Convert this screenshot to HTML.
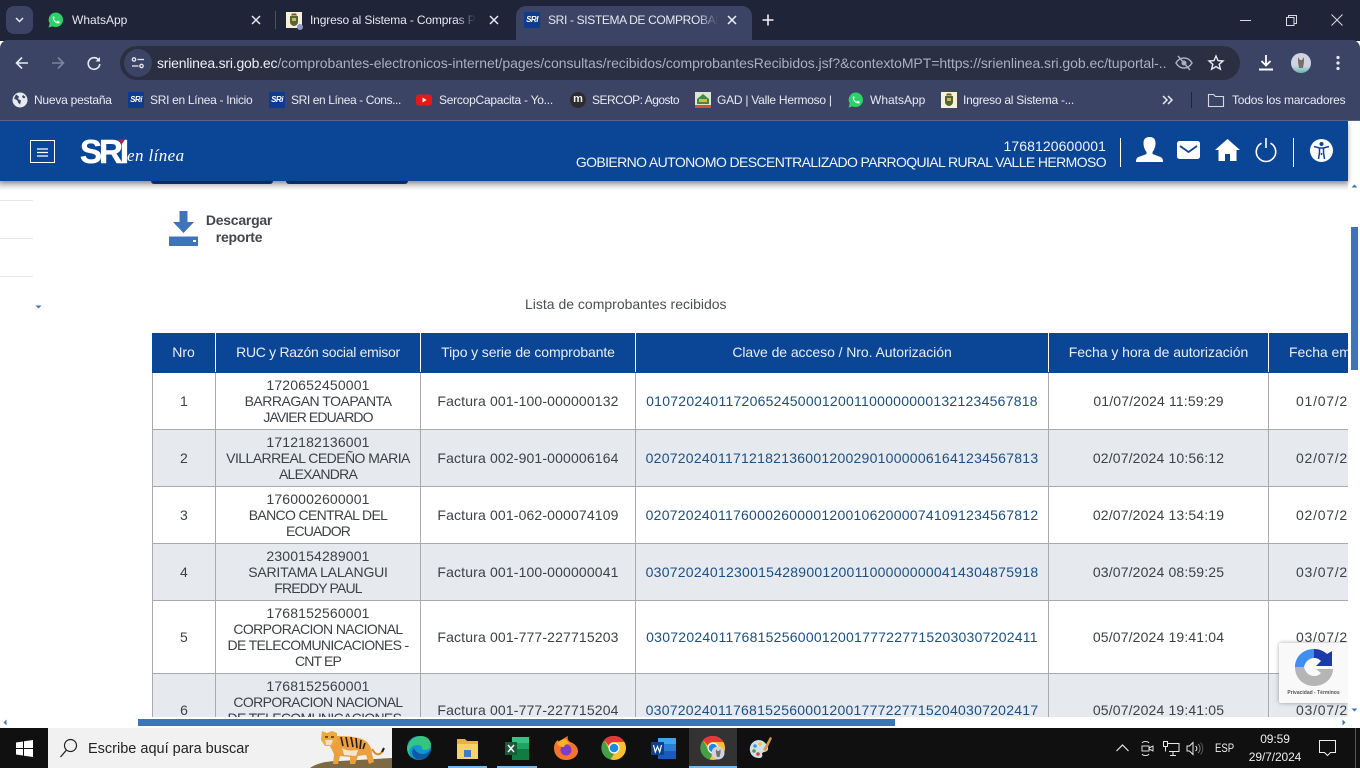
<!DOCTYPE html>
<html lang="es"><head><meta charset="utf-8"><title>SRI</title>
<style>
html,body{margin:0;padding:0}
body{width:1360px;height:768px;position:relative;overflow:hidden;background:#fff;font-family:"Liberation Sans",sans-serif;color:#3c4146}
.a,.a *{box-sizing:border-box}
.a{position:absolute;white-space:nowrap}
svg{position:absolute;overflow:visible}
.t{font-size:12px;color:#e6e8ef;line-height:16px}
.bm{font-size:12px;color:#e8eaf2;line-height:16px;top:92px}
.ic{width:16px;height:16px;top:92px}
.sri{background:#0d3c8f;color:#fff;font:italic bold 8px/16px "Liberation Sans",sans-serif;text-align:center;letter-spacing:-.5px}
.th{background:#0b4596;color:#e9eef6;font-size:14px;line-height:39px;text-align:center;top:333px;height:39px}
.c{font-size:14px;line-height:16px;text-align:center;color:#3c4146;letter-spacing:.15px;display:flex;align-items:center;justify-content:center;flex-direction:column;overflow:hidden}
.c span,.r span{display:block}
.k{color:#1a4f85;letter-spacing:.25px}
.d{letter-spacing:.75px}
.ln{background:#a9aaad}
</style></head><body>

<!-- page content -->
<div class="a" style="left:0;top:181px;width:1348px;height:10px;background:linear-gradient(#cfcfcf,#fff)"></div>
<div class="a" style="left:151px;top:181px;width:122px;height:3px;background:#0b3a80;border-radius:0 0 3px 3px"></div>
<div class="a" style="left:286px;top:181px;width:122px;height:3px;background:#0b3a80;border-radius:0 0 3px 3px"></div>
<div class="a" style="left:0;top:200px;width:33px;height:1px;background:#e8e8e8"></div>
<div class="a" style="left:0;top:238px;width:33px;height:1px;background:#e8e8e8"></div>
<div class="a" style="left:0;top:276px;width:33px;height:1px;background:#e8e8e8"></div>
<svg style="left:35px;top:305px" width="7" height="4"><path d="M0.5 0.5h6L3.5 3.5z" fill="#3f74ba"/></svg>
<svg style="left:169px;top:211px" width="29" height="36"><path d="M10.5 0h8v11h6.5L14.500 22 4 11h6.500z" fill="#3f74ba"/><path d="M0 25.500h29V35H0z" fill="#3f74ba"/><path d="M24 29h3v2h-3z" fill="#fff"/></svg>
<div class="a" style="left:199px;top:212px;width:80px;text-align:center;font-size:14px;line-height:17px;font-weight:bold;color:#42464c;letter-spacing:-.25px">Descargar<br>reporte</div>
<div class="a" style="left:525px;top:296px;font-size:14px;line-height:16px;color:#4b4f54">Lista de comprobantes recibidos</div>

<!-- table backgrounds -->
<div class="a" style="left:152px;top:430px;width:1196px;height:56px;background:#e6e9ee"></div>
<div class="a" style="left:152px;top:544px;width:1196px;height:56px;background:#e6e9ee"></div>
<div class="a" style="left:152px;top:674px;width:1196px;height:43px;background:#e6e9ee"></div>
<!-- header -->
<div class="a th" style="left:152px;width:63px">Nro</div>
<div class="a th" style="left:216px;width:204px;letter-spacing:-.3px">RUC y Razón social emisor</div>
<div class="a th" style="left:421px;width:214px;letter-spacing:-.12px">Tipo y serie de comprobante</div>
<div class="a th" style="left:636px;width:412px;letter-spacing:-.07px">Clave de acceso / Nro. Autorización</div>
<div class="a th" style="left:1049px;width:219px;letter-spacing:-.04px">Fecha y hora de autorización</div>
<div class="a th" style="left:1269px;width:79px;overflow:hidden;text-align:left;padding-left:20px;letter-spacing:-.05px">Fecha emisión</div>
<div class="a" style="left:152px;top:372px;width:1196px;height:1px;background:#0b4596"></div>
<!-- grid lines -->
<div class="a ln" style="left:152px;top:429px;width:1196px;height:1px"></div>
<div class="a ln" style="left:152px;top:486px;width:1196px;height:1px"></div>
<div class="a ln" style="left:152px;top:543px;width:1196px;height:1px"></div>
<div class="a ln" style="left:152px;top:600px;width:1196px;height:1px"></div>
<div class="a ln" style="left:152px;top:673px;width:1196px;height:1px"></div>
<div class="a ln" style="left:152px;top:373px;width:1px;height:344px"></div>
<div class="a ln" style="left:215px;top:373px;width:1px;height:344px"></div>
<div class="a ln" style="left:420px;top:373px;width:1px;height:344px"></div>
<div class="a ln" style="left:635px;top:373px;width:1px;height:344px"></div>
<div class="a ln" style="left:1048px;top:373px;width:1px;height:344px"></div>
<div class="a ln" style="left:1268px;top:373px;width:1px;height:344px"></div>

<!-- row 1 -->
<div class="a c" style="left:153px;top:373px;width:62px;height:56px">1</div>
<div class="a c" style="left:216px;top:373px;width:204px;height:56px"><span>1720652450001</span><span style="letter-spacing:-.5px">BARRAGAN TOAPANTA</span><span style="letter-spacing:-.9px">JAVIER EDUARDO</span></div>
<div class="a c" style="left:421px;top:373px;width:214px;height:56px">Factura 001-100-000000132</div>
<div class="a c k" style="left:636px;top:373px;width:412px;height:56px">0107202401172065245000120011000000001321234567818</div>
<div class="a c" style="left:1049px;top:373px;width:219px;height:56px">01/07/2024 11:59:29</div>
<div class="a c d" style="left:1296px;top:373px;width:52px;height:56px;align-items:flex-start">01/07/2</div>
<!-- row 2 -->
<div class="a c" style="left:153px;top:430px;width:62px;height:56px">2</div>
<div class="a c" style="left:216px;top:430px;width:204px;height:56px"><span>1712182136001</span><span style="letter-spacing:-.55px">VILLARREAL CEDEÑO MARIA</span><span style="letter-spacing:-.75px">ALEXANDRA</span></div>
<div class="a c" style="left:421px;top:430px;width:214px;height:56px">Factura 002-901-000006164</div>
<div class="a c k" style="left:636px;top:430px;width:412px;height:56px">0207202401171218213600120029010000061641234567813</div>
<div class="a c" style="left:1049px;top:430px;width:219px;height:56px">02/07/2024 10:56:12</div>
<div class="a c d" style="left:1296px;top:430px;width:52px;height:56px;align-items:flex-start">02/07/2</div>
<!-- row 3 -->
<div class="a c" style="left:153px;top:487px;width:62px;height:56px">3</div>
<div class="a c" style="left:216px;top:487px;width:204px;height:56px"><span>1760002600001</span><span style="letter-spacing:-.65px">BANCO CENTRAL DEL</span><span style="letter-spacing:-.85px">ECUADOR</span></div>
<div class="a c" style="left:421px;top:487px;width:214px;height:56px">Factura 001-062-000074109</div>
<div class="a c k" style="left:636px;top:487px;width:412px;height:56px">0207202401176000260000120010620000741091234567812</div>
<div class="a c" style="left:1049px;top:487px;width:219px;height:56px">02/07/2024 13:54:19</div>
<div class="a c d" style="left:1296px;top:487px;width:52px;height:56px;align-items:flex-start">02/07/2</div>
<!-- row 4 -->
<div class="a c" style="left:153px;top:544px;width:62px;height:56px">4</div>
<div class="a c" style="left:216px;top:544px;width:204px;height:56px"><span>2300154289001</span><span style="letter-spacing:-.2px">SARITAMA LALANGUI</span><span style="letter-spacing:-.85px">FREDDY PAUL</span></div>
<div class="a c" style="left:421px;top:544px;width:214px;height:56px">Factura 001-100-000000041</div>
<div class="a c k" style="left:636px;top:544px;width:412px;height:56px">0307202401230015428900120011000000000414304875918</div>
<div class="a c" style="left:1049px;top:544px;width:219px;height:56px">03/07/2024 08:59:25</div>
<div class="a c d" style="left:1296px;top:544px;width:52px;height:56px;align-items:flex-start">03/07/2</div>
<!-- row 5 -->
<div class="a c" style="left:153px;top:601px;width:62px;height:72px">5</div>
<div class="a c" style="left:216px;top:601px;width:204px;height:72px"><span>1768152560001</span><span style="letter-spacing:-.6px">CORPORACION NACIONAL</span><span style="letter-spacing:-.68px">DE TELECOMUNICACIONES -</span><span style="letter-spacing:-.85px">CNT EP</span></div>
<div class="a c" style="left:421px;top:601px;width:214px;height:72px">Factura 001-777-227715203</div>
<div class="a c k" style="left:636px;top:601px;width:412px;height:72px">0307202401176815256000120017772277152030307202411</div>
<div class="a c" style="left:1049px;top:601px;width:219px;height:72px">05/07/2024 19:41:04</div>
<div class="a c d" style="left:1296px;top:601px;width:52px;height:72px;align-items:flex-start">03/07/2</div>
<!-- row 6 -->
<div class="a" style="left:153px;top:702px;width:62px;height:15px;overflow:hidden;font-size:14px;line-height:16px;text-align:center">6</div>
<div class="a r" style="left:216px;top:678px;width:204px;height:39px;overflow:hidden;font-size:14px;line-height:16px;text-align:center;letter-spacing:.15px"><span>1768152560001</span><span style="letter-spacing:-.6px">CORPORACION NACIONAL</span><span style="letter-spacing:-.68px">DE TELECOMUNICACIONES -</span></div>
<div class="a" style="left:421px;top:702px;width:214px;height:15px;overflow:hidden;font-size:14px;line-height:16px;text-align:center;letter-spacing:.15px">Factura 001-777-227715204</div>
<div class="a" style="left:636px;top:702px;width:412px;height:15px;overflow:hidden;font-size:14px;line-height:16px;text-align:center;letter-spacing:.25px;color:#1a4f85">0307202401176815256000120017772277152040307202417</div>
<div class="a" style="left:1049px;top:702px;width:219px;height:15px;overflow:hidden;font-size:14px;line-height:16px;text-align:center;letter-spacing:.15px">05/07/2024 19:41:05</div>
<div class="a" style="left:1296px;top:702px;width:52px;height:15px;overflow:hidden;font-size:14px;line-height:16px;letter-spacing:.75px">03/07/2</div>

<!-- recaptcha -->
<div class="a" style="left:1279px;top:643px;width:69px;height:60px;background:#f9f9f9;box-shadow:0 0 4px rgba(0,0,0,.35);border-radius:2px 0 0 2px"></div>
<svg style="left:1295px;top:649px" width="38" height="37" viewBox="0 0 38 37">
<path d="M0 18C0 8 8 0 19 0v9c-5 0-9 4-10 9z" fill="#3f8ef2"/>
<path d="M19 0c5 0 10 2 13 5l5-3v15H21l5-5c-2-2-4-3-7-3z" fill="#1c3aa9"/>
<path d="M0 18h9c1 5 5 9 10 9 3 0 5-1 7-3l-5-4h17c0 9-8 17-19 17C8 37 0 29 0 18z" fill="#b5b5b5"/>
</svg>
<div class="a" style="left:1279px;top:689px;width:69px;text-align:center;font-size:5px;line-height:8px;font-weight:bold;color:#555">Privacidad - Términos</div>

<!-- scrollbars -->
<div class="a" style="left:1348px;top:181px;width:12px;height:536px;background:#fff"></div>
<svg style="left:1351px;top:184px" width="7" height="4"><path d="M0.500 3.500h6L3.500 0.500z" fill="#3f74ba"/></svg>
<div class="a" style="left:1351px;top:227px;width:7px;height:143px;background:#3f74ba"></div>
<svg style="left:1351px;top:708px" width="7" height="4"><path d="M0.500 0.500h6L3.500 3.500z" fill="#3f74ba"/></svg>
<div class="a" style="left:0;top:717px;width:1360px;height:11px;background:#fff"></div>
<svg style="left:3px;top:719px" width="4" height="7"><path d="M3.500 0.500v6L0.500 3.500z" fill="#3f74ba"/></svg>
<div class="a" style="left:138px;top:719px;width:757px;height:7px;background:#3f74ba"></div>
<svg style="left:1342px;top:719px" width="4" height="7"><path d="M0.500 0.500v6L3.500 3.500z" fill="#3f74ba"/></svg>

<!-- SRI header -->
<div class="a" style="left:0;top:121px;width:1348px;height:60px;background:#0b4596;box-shadow:0 2px 5px rgba(0,0,0,.35)"></div>
<div class="a" style="left:30px;top:140px;width:25px;height:23px;border:1px solid #fff"></div>
<svg style="left:37px;top:148px" width="11" height="9"><path d="M0 1h11M0 4.500h11M0 8h11" stroke="#fff" stroke-width="1.200"/></svg>
<div class="a" style="left:80px;top:134px;font:bold 33px/36px 'Liberation Sans',sans-serif;color:#fff;letter-spacing:-3px;-webkit-text-stroke:.5px #fff">SRI</div>
<svg style="left:117px;top:139px" width="8" height="6"><path d="M1 0.500h7L5 5z" fill="#c8203c"/></svg>
<div class="a" style="left:127px;top:146px;font:italic 17px/20px 'Liberation Serif',serif;color:#fff;letter-spacing:.4px">en línea</div>
<div class="a" style="right:254px;top:138px;text-align:right;font-size:14px;line-height:16px;color:#f2f5fa"><span style="letter-spacing:.1px">1768120600001</span><br><span style="letter-spacing:-.61px">GOBIERNO AUTONOMO DESCENTRALIZADO PARROQUIAL RURAL VALLE HERMOSO</span></div>
<div class="a" style="left:1120px;top:138px;width:1px;height:29px;background:#fff"></div>
<div class="a" style="left:1293px;top:138px;width:1px;height:29px;background:#fff"></div>
<svg style="left:1136px;top:137px" width="27" height="25" viewBox="0 0 27 25"><path d="M13.500 0c4 0 6 2 6 6 0 4-1.500 7-3 9v2l8 3c1.500.6 2.500 2 2.500 5H0c0-3 1-4.400 2.500-5l8-3v-2c-1.500-2-3-5-3-9 0-4 2-6 6-6z" fill="#fff"/></svg>
<svg style="left:1177px;top:141px" width="23" height="18" viewBox="0 0 23 18"><rect width="23" height="18" rx="2.500" fill="#fff"/><path d="M3 5l8.500 6L20 5" fill="none" stroke="#0b4596" stroke-width="1.800"/></svg>
<svg style="left:1215px;top:139px" width="25" height="22" viewBox="0 0 25 22"><path d="M12.500 0L25 11h-3.500v11H15v-7h-5v7H3.500V11H0z" fill="#fff"/></svg>
<svg style="left:1255px;top:138px" width="22" height="23" viewBox="0 0 22 23"><path d="M6.500 5.200a9.700 9.700 0 1 0 9 0" fill="none" stroke="#fff" stroke-width="1.600"/><path d="M11 0v10" stroke="#fff" stroke-width="1.600"/></svg>
<svg style="left:1310px;top:139px" width="23" height="23" viewBox="0 0 23 23"><circle cx="11.500" cy="11.500" r="11.500" fill="#fff"/><circle cx="11.500" cy="5" r="2" fill="#0b4596"/><path d="M4 7.500l5.500 1.500h4L19 7.500M9.500 9v4.500l-1 6.500M13.500 9v4.500l1 6.500M11.500 14v2" fill="none" stroke="#0b4596" stroke-width="1.500"/></svg>

<!-- Chrome frame -->
<div class="a" style="left:0;top:0;width:1360px;height:41px;background:#1f2438"></div>
<div class="a" style="left:0;top:40px;width:1360px;height:81px;background:#3c4466;border-radius:8px 8px 0 0"></div>
<div class="a" style="left:6px;top:6px;width:27px;height:28px;background:#3c4466;border-radius:8px"></div>
<svg style="left:15px;top:17px" width="9" height="6"><path d="M1 1l3.500 3.500L8 1" fill="none" stroke="#e8eaf2" stroke-width="1.500"/></svg>
<!-- whatsapp tab -->
<svg style="left:48px;top:12px" width="16" height="16" viewBox="0 0 16 16"><path d="M8 .500A7.300 7.300 0 0 0 1.700 11.500L.5 15.500l4.100-1.100A7.300 7.300 0 1 0 8 .500z" fill="#2bd366"/><path d="M5.500 4.200c-.5.300-1 1.200-.8 2.200.4 2 2.500 4.300 4.700 5 1 .3 2-.2 2.300-.9.200-.5.100-.8-.1-.9l-1.600-.8c-.3-.1-.5 0-.7.300l-.5.600c-1.100-.3-2.500-1.700-2.900-2.800l.5-.6c.2-.2.200-.4.100-.7l-.6-1.400c-.1-.3-.2-.3-.4-.2z" fill="#fff"/></svg>
<div class="a t" style="left:72px;top:12px">WhatsApp</div>
<svg style="left:251px;top:15px" width="10" height="10"><path d="M1 1l8 8M9 1l-8 8" stroke="#e8eaf2" stroke-width="1.500"/></svg>
<div class="a" style="left:275px;top:11px;width:1px;height:18px;background:#4a5068"></div>
<!-- compras tab -->
<div class="a" style="left:286px;top:12px;width:16px;height:16px;background:#f6f0d8"></div>
<svg style="left:288px;top:13px" width="12" height="14" viewBox="0 0 12 14"><path d="M2 3h8v6c0 2-2 4-4 4s-4-2-4-4z" fill="#56643a"/><path d="M4 5h4v3H4z" fill="#d4b44a"/><path d="M4 0.500h4l1 2H3z" fill="#6b5a2c"/></svg>
<div class="a" style="left:297px;top:24px;width:6px;height:6px;background:#8f99c8;border-radius:50%"></div>
<div class="a t" style="left:310px;top:12px;width:166px;overflow:hidden;letter-spacing:-.15px;-webkit-mask-image:linear-gradient(90deg,#000 88%,transparent)">Ingreso al Sistema - Compras Públicas</div>
<svg style="left:489px;top:15px" width="10" height="10"><path d="M1 1l8 8M9 1l-8 8" stroke="#e8eaf2" stroke-width="1.500"/></svg>
<!-- active tab -->
<div class="a" style="left:516px;top:6px;width:236px;height:36px;background:#3c4466;border-radius:10px 10px 0 0"></div>
<div class="a sri" style="left:524px;top:12px;width:16px;height:16px">SRI</div>
<div class="a t" style="left:548px;top:12px;width:170px;overflow:hidden;letter-spacing:-.35px;-webkit-mask-image:linear-gradient(90deg,#000 88%,transparent)">SRI - SISTEMA DE COMPROBANTES</div>
<svg style="left:727px;top:15px" width="10" height="10"><path d="M1 1l8 8M9 1l-8 8" stroke="#f0f2f8" stroke-width="1.500"/></svg>
<svg style="left:762px;top:14px" width="12" height="12"><path d="M6 0.500v11M0.500 6h11" stroke="#f0f2f8" stroke-width="1.600"/></svg>
<!-- window controls -->
<svg style="left:1240px;top:20px" width="11" height="1"><path d="M0 .5h11" stroke="#d8dae2"/></svg>
<svg style="left:1286px;top:15px" width="11" height="11"><path d="M.5 2.500h7.500v8H.5zM2.500 2.500V.5h8v8H8" fill="none" stroke="#d8dae2"/></svg>
<svg style="left:1331px;top:14px" width="12" height="12"><path d="M.5.5l11 11M11.500.5l-11 11" stroke="#d8dae2"/></svg>

<!-- toolbar -->
<svg style="left:15px;top:56px" width="14" height="14"><path d="M13 7H2M7 1.500L1.500 7 7 12.500" fill="none" stroke="#e8eaf2" stroke-width="1.600"/></svg>
<svg style="left:51px;top:56px" width="14" height="14"><path d="M1 7h11M7 1.500L12.500 7 7 12.500" fill="none" stroke="#7d84a0" stroke-width="1.600"/></svg>
<svg style="left:87px;top:56px" width="14" height="14" viewBox="0 0 14 14"><path d="M12 4.500A5.800 5.800 0 1 0 12.800 8" fill="none" stroke="#e8eaf2" stroke-width="1.600"/><path d="M13 1v4.500H8.500z" fill="#e8eaf2"/></svg>
<div class="a" style="left:120px;top:46px;width:1120px;height:34px;background:#2a2f42;border-radius:17px"></div>
<div class="a" style="left:124px;top:49px;width:28px;height:28px;background:#3c4466;border-radius:50%"></div>
<svg style="left:131px;top:57px" width="14" height="12" viewBox="0 0 14 12"><circle cx="3" cy="2.500" r="1.700" fill="none" stroke="#e8eaf2" stroke-width="1.300"/><path d="M6.500 2.500H13M1 9h6.500" stroke="#e8eaf2" stroke-width="1.300"/><circle cx="10.500" cy="9" r="1.700" fill="none" stroke="#e8eaf2" stroke-width="1.300"/></svg>
<div class="a" style="left:157px;top:55px;font-size:14px;line-height:17px;color:#aab0c4;width:1010px;overflow:hidden;letter-spacing:-.06px"><span style="color:#eef0f6;letter-spacing:-.2px">srienlinea.sri.gob.ec</span>/comprobantes-electronicos-internet/pages/consultas/recibidos/comprobantesRecibidos.jsf?&amp;contextoMPT=https://srienlinea.sri.gob.ec/tuportal-...</div>
<svg style="left:1175px;top:54px" width="18" height="18" viewBox="0 0 18 18"><path d="M1 9c2-3.500 5-5 8-5s6 1.500 8 5c-2 3.500-5 5-8 5s-6-1.500-8-5z" fill="none" stroke="#aab0c4" stroke-width="1.400"/><circle cx="9" cy="9" r="2.500" fill="#aab0c4"/><path d="M3 2l12 14" stroke="#aab0c4" stroke-width="1.500"/></svg>
<svg style="left:1208px;top:55px" width="16" height="15" viewBox="0 0 16 15"><path d="M8 1l2 4.600 5 .4-3.800 3.300 1.200 4.900L8 11.600l-4.400 2.600 1.200-4.900L1 6l5-.4z" fill="none" stroke="#e8eaf2" stroke-width="1.400"/></svg>
<svg style="left:1258px;top:54px" width="16" height="17" viewBox="0 0 16 17"><path d="M8 1v10M3.500 7L8 11.500 12.500 7" fill="none" stroke="#fff" stroke-width="1.800"/><path d="M1 15.500h14" stroke="#fff" stroke-width="2"/></svg>
<div class="a" style="left:1291px;top:53px;width:20px;height:20px;border-radius:50%;background:linear-gradient(#cfd3e2 65%,#5fb8b0)"></div>
<svg style="left:1296px;top:56px" width="10" height="14"><path d="M2 1l2 3h2l2-3v5L7 12H3L2 6z" fill="#7a6f62"/></svg>
<svg style="left:1336px;top:55px" width="4" height="16"><circle cx="2" cy="2.500" r="1.600" fill="#e8eaf2"/><circle cx="2" cy="8" r="1.600" fill="#e8eaf2"/><circle cx="2" cy="13.500" r="1.600" fill="#e8eaf2"/></svg>

<!-- bookmarks -->
<svg class="ic" style="left:12px" viewBox="0 0 16 16"><circle cx="8" cy="8" r="7.500" fill="#e8eaf2"/><path d="M4 2.500l3 2-1 2.500 3 1.500-1 4-2-2-.5-2L2 6.500zM11 3l2.500 2-1.500 1.500L10 5z" fill="#3c4466"/></svg>
<div class="a bm" style="left:34px;letter-spacing:-.23px">Nueva pestaña</div>
<div class="a sri ic" style="left:128px">SRi</div>
<div class="a bm" style="left:150px;letter-spacing:-.3px">SRI en Línea - Inicio</div>
<div class="a sri ic" style="left:269px">SRi</div>
<div class="a bm" style="left:291px;letter-spacing:-.4px">SRI en Línea - Cons...</div>
<svg class="ic" style="left:416px" viewBox="0 0 16 16"><rect y="2.500" width="16" height="11" rx="3" fill="#e61919"/><path d="M6.500 5.500v5l4-2.500z" fill="#fff"/></svg>
<div class="a bm" style="left:439px;letter-spacing:-.25px">SercopCapacita - Yo...</div>
<div class="a" style="left:570px;top:92px;width:16px;height:16px;border-radius:50%;background:#2d2d2f;color:#f2f2f2;font:bold 11px/15px 'Liberation Sans',sans-serif;text-align:center">m</div>
<div class="a bm" style="left:592px;letter-spacing:-.5px">SERCOP: Agosto</div>
<svg class="ic" style="left:695px" viewBox="0 0 16 16"><rect width="16" height="16" fill="#dfe3d2"/><path d="M8 2l6 5v5H2V7z" fill="#3f8a4a"/><path d="M4 7h8v3H4z" fill="#d8b84a"/><path d="M0 13h16v3H0z" fill="#c8553a"/></svg>
<div class="a bm" style="left:717px;letter-spacing:-.25px">GAD | Valle Hermoso |</div>
<svg class="ic" style="left:848px" viewBox="0 0 16 16"><path d="M8 .500A7.300 7.300 0 0 0 1.700 11.500L.5 15.500l4.100-1.100A7.300 7.300 0 1 0 8 .500z" fill="#2bd366"/><path d="M5.500 4.200c-.5.300-1 1.200-.8 2.200.4 2 2.500 4.300 4.700 5 1 .3 2-.2 2.300-.9.200-.5.100-.8-.1-.9l-1.600-.8c-.3-.1-.5 0-.7.300l-.5.600c-1.100-.3-2.500-1.700-2.900-2.800l.5-.6c.2-.2.200-.4.100-.7l-.6-1.400c-.1-.3-.2-.3-.4-.2z" fill="#fff"/></svg>
<div class="a bm" style="left:870px">WhatsApp</div>
<div class="a ic" style="left:941px;background:#f6f0d8"></div>
<svg style="left:943px;top:93px" width="12" height="14" viewBox="0 0 12 14"><path d="M2 3h8v6c0 2-2 4-4 4s-4-2-4-4z" fill="#56643a"/><path d="M4 5h4v3H4z" fill="#d4b44a"/><path d="M4 0.500h4l1 2H3z" fill="#6b5a2c"/></svg>
<div class="a bm" style="left:963px;letter-spacing:-.25px">Ingreso al Sistema -...</div>
<svg style="left:1162px;top:95px" width="11" height="10"><path d="M1 1l4 4-4 4M6 1l4 4-4 4" fill="none" stroke="#e8eaf2" stroke-width="1.500"/></svg>
<div class="a" style="left:1191px;top:92px;width:1px;height:16px;background:#1f2438"></div>
<svg style="left:1208px;top:93px" width="16" height="14"><path d="M.5 1.500h5l2 2h8v10H.5z" fill="none" stroke="#d8dae2" stroke-width="1.100"/></svg>
<div class="a bm" style="left:1232px;letter-spacing:-.2px">Todos los marcadores</div>
<div class="a" style="left:0;top:120px;width:1360px;height:1px;background:#5a6384"></div>

<!-- taskbar -->
<div class="a" style="left:0;top:728px;width:1360px;height:40px;background:#101010"></div>
<svg style="left:16px;top:740px" width="17" height="17" viewBox="0 0 17 17"><path d="M0 2.500l7-1v6.500H0zM8 1.300L17 0v8H8zM0 9h7v6.500l-7-1zM8 9h9v8l-9-1.300z" fill="#fff"/></svg>
<div class="a" style="left:48px;top:728px;width:344px;height:40px;background:#f1f1f1"></div>
<svg style="left:59px;top:738px" width="20" height="20" viewBox="0 0 20 20"><circle cx="11.500" cy="7.500" r="6" fill="none" stroke="#222" stroke-width="1.200"/><path d="M7.500 12l-6 7" stroke="#222" stroke-width="1.300"/></svg>
<div class="a" style="left:88px;top:741px;font-size:14.500px;line-height:17px;color:#222">Escribe aquí para buscar</div>
<!-- tiger -->
<svg style="left:310px;top:728px" width="82" height="40" viewBox="0 0 82 40">
<path d="M0 40C6 36 14 33 30 33L82 30V40z" fill="#7c6a45"/>
<path d="M62 21C66 28 70 28 73 22" fill="none" stroke="#d8892e" stroke-width="2"/>
<path d="M72 24l2-4" stroke="#2a1c10" stroke-width="2"/>
<path d="M24 8C34 8 46 8 54 12C60 15 62 22 62 26L64 34L59 36L56 27L48 28L45 36L40 36L40 29L30 28L28 36L23 36L24 26L20 18z" fill="#eba040"/>
<path d="M32 20C38 24 44 22 48 22L46 28L34 27z" fill="#f2e6d0"/>
<path d="M31 9l2 9M36 9l2 10M41 9l2 10M46 10l1 10M51 12l-1 9M55 15l-2 6" stroke="#2a1c10" stroke-width="1.600" fill="none"/>
<path d="M12 3L17 5L22 3L27 5L27 14L22 18L15 18L11 12z" fill="#eda83f"/>
<path d="M15 12h8l-2 5h-5z" fill="#efe0c4"/>
<path d="M15 9h3M21 9h3" stroke="#2a1c10" stroke-width="1.200"/>
</svg>
<!-- edge -->
<svg style="left:407px;top:736px" width="24" height="24" viewBox="0 0 24 24"><circle cx="12" cy="12" r="12" fill="#1296cf"/><path d="M0 12C2 4 8 0 14 0c6 0 10 4 10 9 0 3-3 5-6 5-4 0-3-2-3-3-2-3-9-3-12 2-1 2-1 6 2 9-3-2-5-6-5-10z" fill="#37c481"/><path d="M24 13c0 4-3 8-7 10-4 1-8 1-10-2-2-2-3-6 0-9 1 3 4 6 9 6 3 0 6-2 8-5z" fill="#0c59a4"/></svg>
<!-- explorer -->
<svg style="left:456px;top:737px" width="23" height="23" viewBox="0 0 23 23"><path d="M1 2h8l2 2h11v5H1z" fill="#e8b33a"/><path d="M1 7h21v15H1z" fill="#f6d365"/><path d="M8 13h7v7H8z" fill="#3f7ec2"/></svg>
<div class="a" style="left:448px;top:766px;width:39px;height:2px;background:#76b9ed"></div>
<!-- excel -->
<svg style="left:505px;top:737px" width="24" height="23" viewBox="0 0 24 23"><path d="M7 0h17v23H7z" fill="#21a366"/><path d="M7 0h17v6H7z" fill="#33c481"/><path d="M7 12h17v11H7z" fill="#107c41"/><path d="M0 5h12v13H0z" fill="#185c37"/><path d="M3 8l6 7M9 8l-6 7" stroke="#fff" stroke-width="1.500"/></svg>
<div class="a" style="left:497px;top:766px;width:40px;height:2px;background:#76b9ed"></div>
<!-- firefox -->
<svg style="left:554px;top:736px" width="24" height="24" viewBox="0 0 24 24"><path d="M12 24C5 24 0 19 0 12 0 8 2 5 4 4l1 3c2-3 5-5 9-7-1 3 0 4 2 6 4 1 8 5 8 9 0 5-5 9-12 9z" fill="#f5742b"/><circle cx="12" cy="14" r="5.500" fill="#7c3ccc"/><path d="M3 7c3-3 6-4 9-4 1 3 3 4 6 5-4-1-7 0-8 3-3 0-6-1-7-4z" fill="#ffb229"/></svg>
<!-- chrome -->
<svg style="left:602px;top:736px" width="24" height="24" viewBox="0 0 24 24"><circle cx="12" cy="12" r="12" fill="#fbc02d"/><path d="M12 0a12 12 0 0 1 10.400 6H12a6 6 0 0 0-5.500 3.500L2 4a12 12 0 0 1 10-4z" fill="#e53935"/><path d="M2 4.300l5.200 9A6 6 0 0 0 12 18l-3.500 5.500A12 12 0 0 1 2 4.300z" fill="#43a047"/><circle cx="12" cy="12" r="5.500" fill="#fff"/><circle cx="12" cy="12" r="4.300" fill="#1e88e5"/></svg>
<!-- word -->
<svg style="left:651px;top:737px" width="25" height="23" viewBox="0 0 25 23"><path d="M7 1h18v21H7z" fill="#2b7cd3"/><path d="M7 1h18v6H7z" fill="#41a5ee"/><path d="M7 14h18v8H7z" fill="#185abd"/><path d="M0 5h13v13H0z" fill="#103f91"/><path d="M2.500 8l1.800 7L6.500 9.500 8.700 15l1.800-7" fill="none" stroke="#fff" stroke-width="1.200"/></svg>
<!-- active chrome -->
<div class="a" style="left:689px;top:728px;width:48px;height:40px;background:#333"></div>
<div class="a" style="left:689px;top:766px;width:48px;height:2px;background:#76b9ed"></div>
<svg style="left:701px;top:736px" width="24" height="24" viewBox="0 0 24 24"><circle cx="12" cy="12" r="12" fill="#fbc02d"/><path d="M12 0a12 12 0 0 1 10.400 6H12a6 6 0 0 0-5.500 3.500L2 4a12 12 0 0 1 10-4z" fill="#e53935"/><path d="M2 4.300l5.200 9A6 6 0 0 0 12 18l-3.500 5.500A12 12 0 0 1 2 4.300z" fill="#43a047"/><circle cx="12" cy="12" r="5.500" fill="#fff"/><circle cx="12" cy="12" r="4.300" fill="#1e88e5"/><circle cx="17" cy="17" r="6.500" fill="#cfd3e2"/><path d="M15 13l1.500 2h1.500l1.500-2v4l-1 4h-2.500l-1-4z" fill="#7a6f62"/></svg>
<!-- paint -->
<svg style="left:749px;top:736px" width="25" height="24" viewBox="0 0 25 24"><path d="M9 4C3 5 0 10 1 15c1 5 5 7 9 7 3 0 4-2 3-4 0-2 3-2 5-3 2-2 1-5-1-7-2-3-5-4-8-4z" fill="#cfe0ea"/><circle cx="6" cy="10" r="1.800" fill="#3f8ef2"/><circle cx="5" cy="15" r="1.800" fill="#43a047"/><circle cx="9" cy="18" r="1.800" fill="#e53935"/><circle cx="11" cy="8" r="1.800" fill="#fbc02d"/><path d="M21 1l2 1-6 13-3-1z" fill="#d89a4a"/></svg>

<!-- tray -->
<svg style="left:1116px;top:744px" width="13" height="8"><path d="M.5 7L6.500 1l6 6" fill="none" stroke="#e8e8e8" stroke-width="1.200"/></svg>
<svg style="left:1141px;top:740px" width="14" height="17" viewBox="0 0 14 17"><path d="M1 3c1-2 6-2 7 0M1 14c1 2 6 2 7 0" fill="none" stroke="#ddd"/><rect x="1" y="6" width="7" height="5" fill="none" stroke="#ddd"/><path d="M8 8l4-2v5l-4-2" fill="none" stroke="#ddd"/></svg>
<svg style="left:1163px;top:741px" width="17" height="15" viewBox="0 0 17 15"><path d="M3.500 2.500H16v8H6" fill="none" stroke="#e8e8e8"/><rect x=".5" y=".5" width="4" height="5" fill="#101010" stroke="#e8e8e8"/><path d="M7 14.500h6M10 10.500v4M2.500 5.500v5" stroke="#e8e8e8"/></svg>
<svg style="left:1186px;top:741px" width="17" height="15" viewBox="0 0 17 15"><path d="M1 5h2.500L7 1.500v12L3.500 10H1z" fill="none" stroke="#e8e8e8"/><path d="M9.500 5a3 3 0 0 1 0 5" fill="none" stroke="#e8e8e8"/><path d="M12 3a6 6 0 0 1 0 9" fill="none" stroke="#888"/><path d="M14.500 1.500a9 9 0 0 1 0 12" fill="none" stroke="#555"/></svg>
<div class="a" style="left:1215px;top:741px;font-size:12px;line-height:14px;color:#eee;transform:scaleX(.8);transform-origin:0 0">ESP</div>
<div class="a" style="left:1235px;top:730px;width:80px;text-align:center;font-size:12px;line-height:18px;color:#eee;letter-spacing:-.1px">09:59<br>29/7/2024</div>
<svg style="left:1319px;top:740px" width="17" height="17" viewBox="0 0 17 17"><path d="M.5.500h16v12h-5l-3 3-3-3h-5z" fill="none" stroke="#eee"/></svg>
<div class="a" style="left:1355px;top:728px;width:1px;height:40px;background:#555"></div>
</body></html>
